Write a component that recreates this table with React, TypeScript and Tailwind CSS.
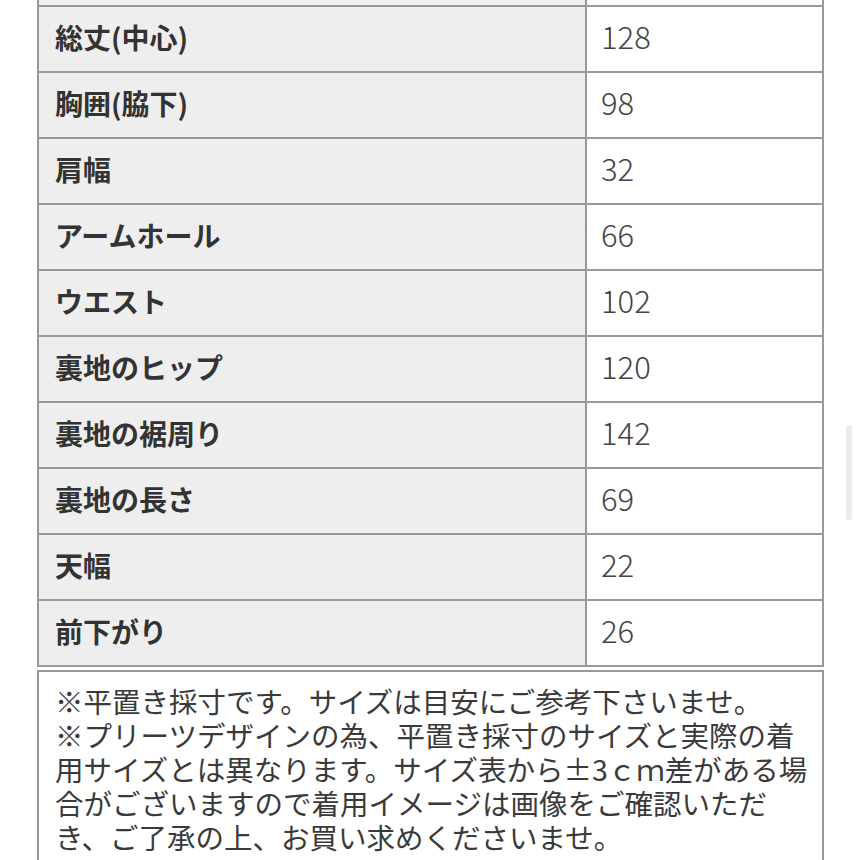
const rows: [string, string][] = [
  ["着丈", "120"],
  ["総丈(中心)", "128"],
  ["胸囲(脇下)", "98"],
  ["肩幅", "32"],
  ["アームホール", "66"],
  ["ウエスト", "102"],
  ["裏地のヒップ", "120"],
  ["裏地の裾周り", "142"],
  ["裏地の長さ", "69"],
  ["天幅", "22"],
  ["前下がり", "26"],
];

const noteLines = [
  "※平置き採寸です。サイズは目安にご参考下さいませ。",
  "※プリーツデザインの為、平置き採寸のサイズと実際の着",
  "用サイズとは異なります。サイズ表から±3ｃｍ差がある場",
  "合がございますので着用イメージは画像をご確認いただ",
  "き、ご了承の上、お買い求めくださいませ。",
];

const App = () => {
  return (
    <div
      className="relative w-[860px] h-[860px] overflow-hidden bg-white text-[#333]"
      style={{fontFamily: '"Noto Sans CJK JP", "Noto Sans", sans-serif'}}
    >
      <div className="ml-[37px] w-[787px] -mt-[61px]">
        {/* size table */}
        <div className="border-x-2 border-b-2 border-[#999]">
          {rows.map(([label, value]) => (
            <div key={label} className="flex h-[66px] border-t-2 border-[#999]">
              <div className="w-[548px] flex items-center pl-[16px] pb-[5px] bg-[#eeeeee] border-r-2 border-[#999] text-[28px] font-bold">
                {label}
              </div>
              <div className="flex-1 flex items-center pl-[14px] pb-[5px] text-[31px] font-light text-[#444]">
                {value}
              </div>
            </div>
          ))}
        </div>

        {/* notes */}
        <div className="mt-[3px] border-2 border-[#999] pl-[16px] pt-[12px] pb-4 text-[28.5px] leading-[34px] text-[#3a3a3a]">
          {noteLines.map((line) => (
            <div key={line} className="whitespace-nowrap">
              {line}
            </div>
          ))}
        </div>
      </div>

      {/* scrollbar */}
      <div className="absolute left-[846px] top-[425px] w-[6px] h-[95px] rounded-full bg-[#ececec]" />
    </div>
  );
};

export default App;
